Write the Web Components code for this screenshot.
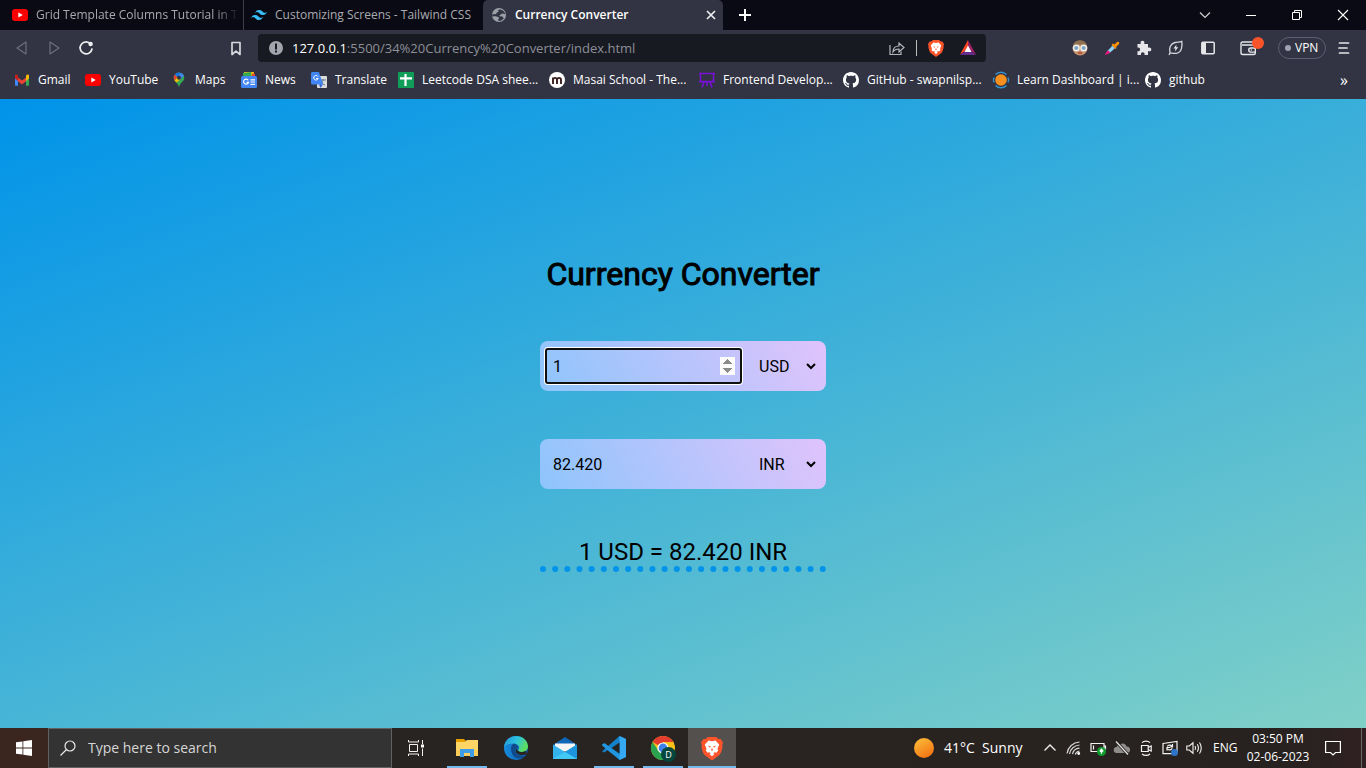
<!DOCTYPE html>
<html lang="en">
<head>
<meta charset="utf-8">
<title>Currency Converter</title>
<style>
  html, body { margin: 0; height: 100%; }
  body { font: 12px/16px "Open Sans", "Noto Sans", sans-serif; color: #fff; overflow: hidden; }
</style>
</head>
<body>
<desktop-screen>
  <browser-chrome slot="browser"></browser-chrome>
  <currency-converter slot="page"></currency-converter>
  <task-bar slot="taskbar"></task-bar>
</desktop-screen>

<script>
const define = (name, html, setup) => {
  const template = document.createElement('template');
  template.innerHTML = html;
  customElements.define(name, class extends HTMLElement {
    constructor() {
      super();
      this.attachShadow({ mode: 'open' }).append(template.content.cloneNode(true));
    }
    connectedCallback() { if (setup) setup(this, this.shadowRoot); }
  });
};

const ICONS = {
  youtube: `<rect x="0" y="2" width="16" height="12" rx="3" fill="#f00"/><path d="M6.3 5.4v5.2L10.8 8z" fill="#fff"/>`,
  tailwind: `<path d="M4 6.4C4.6 4.1 6 3 8.1 3c3.2 0 3.6 2.4 5.2 2.8 1 .3 2-.1 2.7-1.2-.5 2.3-1.9 3.4-4 3.4-3.2 0-3.6-2.4-5.2-2.8C5.7 4.9 4.8 5.3 4 6.4zM0 11.4C.6 9.1 2 8 4.1 8c3.2 0 3.6 2.4 5.2 2.8 1 .3 2-.1 2.7-1.2-.5 2.3-1.9 3.4-4 3.4-3.2 0-3.6-2.4-5.2-2.8-1.1-.3-2 .1-2.8 1.2z" fill="#38bdf8"/>`,
  globe: `<circle cx="8" cy="8" r="7" fill="#9aa0a6"/><path d="M9 2.600c-1.300-.3-2.300.6-1.600 1.500.5.700-.5 1.200-1.400 1.500-.8.300-.4 1.300-1 1.500-1.100.3-2.400-.3-3.800.4l.1 2c1.500.2 3.300-.6 4.200.1.900.6 2.300.3 2.500 1.300.1.800-.9 1-.9 2.100 0 .6.600.9 1.200.9 1.800 0 3.600-1.300 4.600-2.900-.9-.2-1-1.300-1.900-1.600-.8-.2-1.900.5-2.400-.3-.4-.8.4-1.500 1.300-1.700.8-.1.900-.9 1.800-.8.800.1 1.300.8 2.500.5-.4-2-2.400-4.200-5.200-4.500z" fill="#323443"/>`,
  close: `<path d="M4 4l8 8M12 4l-8 8" stroke="#eee" stroke-width="1.7"/>`,
  plus: `<path d="M8 2v12M2 8h12" stroke="#fff" stroke-width="2"/>`,
  chevdown: `<path d="M3 5.5l5 5 5-5" fill="none" stroke="#d0d0d4" stroke-width="1.2"/>`,
  minimize: `<path d="M3 8.5h10" stroke="#fff" stroke-width="1"/>`,
  restore: `<path d="M3.500 5.500h7v7h-7zM5.500 5.500v-2h7v7h-2" fill="none" stroke="#fff"/>`,
  winclose: `<path d="M3 3l10 10M13 3L3 13" stroke="#fff" stroke-width="1.1"/>`,
  back: `<path d="M12 2v12L3 8z" fill="none" stroke="#6c6e7c" stroke-width="1.2" stroke-linejoin="round"/>`,
  forward: `<path d="M4 2v12l9-6z" fill="none" stroke="#6c6e7c" stroke-width="1.2" stroke-linejoin="round"/>`,
  reload: `<path d="M12.8 4.1A6 6 0 1 0 14 9" fill="none" stroke="#eee" stroke-width="1.7" stroke-linecap="round"/><circle cx="12.6" cy="4" r="2.2" fill="#eee"/>`,
  bookmark: `<path d="M4 2.500h8v12l-4-3.300-4 3.300z" fill="none" stroke="#d8d8de" stroke-width="1.7" stroke-linejoin="round"/>`,
  info: `<circle cx="8" cy="8" r="7" fill="#a2a4ae"/><path d="M8 3.500v6M8 10.600v2" stroke="#181a22" stroke-width="2"/>`,
  share: `<path d="M1 5v9.500h11v-3" fill="none" stroke="#b6b7be" stroke-width="1.2"/><path d="M4 12c0-4 2.500-6 6-6V3l5 4.500-5 4.500V9C7.500 9 5.500 9.500 4 12z" fill="none" stroke="#b6b7be" stroke-width="1.2"/>`,
  brave: `<path d="M5 0h6l1.700 1.500h1.600L16 4l-.6 2 .3 1c-.6 3-1.500 5.400-2.500 6.300L8 17l-5.200-3.700C1.800 12.400.9 10 .3 7l.3-1L0 4l1.700-2.500h1.600z" fill="#fb542b"/><path d="M8 3l2.500-.5 2.700 3L12 8.800l.5 1.200-1.400 1.500-1.300-.4L9 12l.8.5L8 14l-1.800-1.500L7 12l-.8-.9-1.300.4L3.500 10 4 8.800 2.800 5.500l2.700-3z" fill="#fff"/><path d="M4.800 6.200l2.400.7-.6.9zM11.200 6.200l-2.400.7.6.9zM8 7.500l.6 2L8 10.400l-.6-.9z" fill="#fb542b"/>`,
  bat: `<path d="M8 0L0 14.500 8 9z" fill="#ff4724"/><path d="M8 0l8 14.500L8 9z" fill="#9e1f63"/><path d="M0 15h16L8 9z" fill="#662d91"/><path d="M8 5.500L4.500 12h7z" fill="#fff"/>`,
  face: `<circle cx="8" cy="8" r="7.5" fill="#c58d68"/><path d="M1 6C2 1.500 5 .5 8 .5S14 1.500 15 6c-3-2-11-2-14 0z" fill="#8d7050"/><circle cx="4.300" cy="8" r="2.800" fill="#7fa6bf" stroke="#f2f2f2" stroke-width="1.400"/><circle cx="11.700" cy="8" r="2.800" fill="#7fa6bf" stroke="#f2f2f2" stroke-width="1.400"/><path d="M6 13h4" stroke="#a33b35" stroke-width="1.200"/>`,
  picker: `<path d="M9 3.500l1.500 1L13 2c1.500-1 3 .5 2 2l-3 3 .5 1-1 1-4-4 1-1z" fill="#ff9100"/><path d="M8.300 5.700l2.600 2.600L5 13.500l-2-2z" fill="#8ed1f5"/><path d="M4 10.200l2.500 2.300L3 14.500 1 15l.7-2z" fill="#e6177c"/>`,
  puzzle: `<path d="M1.500 4h3.300C4.100 1.900 5 .8 6.500.8S8.900 1.900 8.200 4H12v3.700c2-.6 3.300.2 3.300 1.700S14 11.700 12 11.100V15H8.500c.4-1.700-.4-2.700-1.700-2.700S4.600 13.300 5 15H1.500v-3.800c1.700.4 2.600-.4 2.600-1.700S3.200 7.300 1.500 7.700z" fill="#e6e6ea"/>`,
  leaf: `<path d="M2 13c-1.300-5 .5-9.500 5-10.500 2.500-.6 4.500-.3 6.800-1.200.8 5-.2 11.200-5.300 12C6 13.800 4 13 2 13zm0 0l-1 2" fill="none" stroke="#d8d8de" stroke-width="1.3"/><path d="M8.500 4.500L5.500 8.400h2l-.7 3 3.500-4.200H8.200z" fill="#e6e6ea"/>`,
  sidebar: `<rect x="1.800" y="2.300" width="12.400" height="11.400" rx="1" fill="none" stroke="#e6e6ea" stroke-width="1.500"/><path d="M2 2.500h4v11H2z" fill="#e6e6ea"/>`,
  wallet: `<path d="M14 5V3.600C14 2.600 13.400 2 12.400 2H2.600C1.500 2 1 2.700 1 3.700v9C1 13.800 1.700 14.500 2.800 14.500h11c1 0 1.500-.5 1.500-1.500V6.500c0-1-.5-1.500-1.500-1.500H2M15 8h-4.200a2 2 0 0 0 0 4.100H15" fill="none" stroke="#e6e6ea" stroke-width="1.400"/><circle cx="11.300" cy="10" r=".8" fill="#e6e6ea"/>`,
  menu: `<path d="M3.500 3h9M3 8h8M3.500 13h9" stroke="#e6e6ea" stroke-width="1.700" stroke-linecap="round"/>`,
  gmail: `<path d="M1 3v10.500h3V7z" fill="#4285f4"/><path d="M15 3v10.500h-3V7z" fill="#34a853"/><path d="M1 3.500L8 8.500l7-5V7l-7 5.500L1 7z" fill="#ea4335"/><path d="M1 7V4c0-1.300 1-2 2-1.200L4 3.500v6z" fill="#c5221f"/><path d="M12 9.500v-6l1-.7c1-.8 2-.1 2 1.200v3z" fill="#fbbc04"/><path d="M1 6.500l3 2.500v4.500H2c-.6 0-1-.4-1-1z" fill="#4285f4"/><path d="M15 6.500L12 9v4.500h2c.6 0 1-.4 1-1z" fill="#34a853"/>`,
  maps: `<path d="M8 .5a5.300 5.300 0 0 0-5.300 5.300C2.700 9.500 7 10.500 8 15.500c1-5 5.300-6 5.300-9.700A5.300 5.300 0 0 0 8 .5z" fill="#34a853"/><path d="M3.900 2.500L6.500 5 3.700 8.500C2.300 6.500 2.300 4.400 3.900 2.500z" fill="#ea4335"/><path d="M3.900 2.500A5.300 5.300 0 0 1 10 .9L6.500 5z" fill="#1a73e8"/><path d="M10 .9c1.300.5 2.300 1.300 2.900 2.700L9.500 7.500 8 3.700z" fill="#4285f4"/><path d="M9.500 7.500l-4.200 3-1.600-2L6.500 5z" fill="#fbbc04"/><circle cx="8" cy="5.800" r="2" fill="#323443"/>`,
  news: `<path d="M3 0h10v4H3z" fill="#fbbc04"/><path d="M2 1l8-1 .5 4H2z" fill="#34a853"/><path d="M11 1.500l3 .5v3h-3z" fill="#ea4335"/><rect y="4" width="16" height="12" rx="1.500" fill="#4285f4"/><path d="M7.200 8.300A2.500 2.500 0 1 0 7.500 10.300H5.500M9.500 7.800H14M9.500 10H14M9.500 12.300H14" fill="none" stroke="#fff" stroke-width="1.200"/>`,
  translate: `<rect x="6" y="4" width="10" height="12" rx="1" fill="#dcdcdc"/><path d="M9 8h6M12 7v1c0 2.500-2 4-3 5M10 9.500c1 2 2.500 3 4 3.500" stroke="#607d8b" fill="none"/><path d="M1.500 0H8l4 12.500H1.500C.6 12.500 0 12 0 11V1.500C0 .6.6 0 1.500 0z" fill="#4285f4"/><path d="M8 12.500h4L9.500 16z" fill="#3367d6"/><path d="M7 4.600A2.300 2.300 0 1 0 7.200 6.500H5" fill="none" stroke="#fff"/>`,
  sheet: `<rect width="16" height="16" rx="1" fill="#0f9d58"/><path d="M2 6.300h12M7.500 2v12" stroke="#fff" stroke-width="2.200"/>`,
  masai: `<circle cx="8" cy="8" r="8" fill="#fff"/><path d="M4 12V5.500M4 7.800c.4-2.600 3.800-2.600 4 0V12M8 7.800c.4-2.600 4-2.600 4 .2v4" fill="none" stroke="#3b2020" stroke-width="1.900"/>`,
  board: `<path d="M1.500 1.500h13v8h-13zM0 1.500h16M0 9.800h16" fill="none" stroke="#7a10d8" stroke-width="1.500"/><path d="M5 10l-2 5.500M8 10v4M11 10l2 5.500" stroke="#7a10d8" stroke-width="1.500"/>`,
  github: `<path d="M8 0C3.580 0 0 3.580 0 8c0 3.540 2.290 6.530 5.470 7.590.4.070.55-.17.55-.38 0-.19-.01-.82-.01-1.490-2.010.37-2.530-.49-2.690-.94-.09-.23-.48-.94-.82-1.130-.28-.15-.68-.52-.01-.53.63-.01 1.080.58 1.230.82.72 1.210 1.870.87 2.330.66.070-.52.28-.87.51-1.070-1.780-.2-3.640-.89-3.640-3.950 0-.87.31-1.590.82-2.150-.08-.2-.36-1.020.08-2.120 0 0 .67-.21 2.200.82.64-.18 1.320-.27 2-.27s1.360.09 2 .27c1.530-1.040 2.200-.82 2.200-.82.44 1.100.16 1.920.08 2.120.51.56.82 1.270.82 2.150 0 3.070-1.870 3.750-3.650 3.950.29.25.54.73.54 1.480 0 1.070-.01 1.930-.01 2.200 0 .21.15.46.55.38A8.010 8.010 0 0 0 16 8c0-4.420-3.580-8-8-8z" fill="#fff"/>`,
  learn: `<circle cx="8" cy="8" r="5.800" fill="#f7901e"/><path d="M2.500 2.600a7.600 7.600 0 0 1 11 0M2.500 13.400a7.600 7.600 0 0 0 11 0M1 5.500Q-.2 8 1 10.500M15 5.500q1.200 2.500 0 5" fill="none" stroke="#3492cf" stroke-width="1.400"/>`,
  windows: `<path d="M0 2.300L6.500 1.400v6.100H0zM7.300 1.300L16 0v7.500H7.300zM0 8.400h6.500v6.200L0 13.700zM7.300 8.400H16V16l-8.700-1.300z" fill="#fff"/>`,
  search: `<circle cx="10" cy="6" r="5" fill="none" stroke="#e8e8e8" stroke-width="1.200"/><path d="M6.500 9.500L.5 15.500" stroke="#e8e8e8" stroke-width="1.300"/>`,
  taskview: `<path d="M1.500 4.500h8v7h-8zM.5 0v2h10V0M.5 16v-2h10v2M14.500 0v4M14.500 8.500V16" fill="none" stroke="#f2f2f2"/><path d="M13 4.500h3v3h-3z" fill="#fff"/>`,
  folder: `<path d="M1 3h8l2 2v3H1z" fill="#e8a000"/><path d="M1 6h9l2-2h11v16H1z" fill="#ffd666"/><path d="M1 14h22v6H1z" fill="#f9c74f" opacity=".6"/><path d="M5 21v-8h14v8h-4v-4H9v4z" fill="#3f9de8"/><path d="M9 17h6v3H9z" fill="#f8cf60"/>`,
  edge: `<defs><linearGradient id="e1" x1="0" y1="0" x2="1" y2=".4"><stop stop-color="#2390d9"/><stop offset=".55" stop-color="#2cc2de"/><stop offset="1" stop-color="#5bdd60"/></linearGradient><linearGradient id="e2"><stop stop-color="#168cdd"/><stop offset="1" stop-color="#0f56a8"/></linearGradient></defs><circle cx="12" cy="12" r="12" fill="url(#e2)"/><path d="M0 11C1 4 6 0 12 0c7 0 12 5 12 10.500 0 3.500-2.800 5.500-6 5.500-3 0-4.500-1.200-3.500-2.600 2.200-3.200-1.500-6-5-6C5 7.400 1.500 9 0 11z" fill="url(#e1)"/><path d="M9.300 7.800C6 10 6.500 17 10 20.500c3 2.500 7.500 2.600 12-1-4 1.300-9 .2-10.500-3.500-.9-2.500.5-4.500 2.700-4.300-.5-2.500-2.400-4-4.900-3.900z" fill="#114a8b"/><path d="M22.800 17.600c-3 2.400-8 2.300-10.500-.8-1-1.300-1-3.500 1-4.500.3 1-.8 1.500.8 2.800 2 1.300 5 1.300 7.500-.3z" fill="#272320"/>`,
  mail: `<path d="M0 9l12-8 12 8v4H0z" fill="#1067b8"/><path d="M2 7.500h20v8H2z" fill="#f5f5f5"/><path d="M0 8.500l12 7.500L24 8.500V23H0z" fill="#35b3ef"/><path d="M24 8.500V23L12 16z" fill="#1d93dd"/><path d="M0 23l12-7 12 7z" fill="#42c8f5"/>`,
  vscode: `<path d="M17.500 0L24 3v18l-6.500 3L6 13.500 2.500 16.500 0 15.300l15-13z" fill="#1481cb"/><path d="M0 8.500L2.500 7 18 19v5L0 10z" fill="#2197e0"/><path d="M17.500 0L24 3v18l-6.500 3z" fill="#35a9f2"/><path d="M17.500 6.500v11L9.500 12z" fill="#272320"/><path d="M3 12L0 9.500v5z" fill="#272320"/>`,
  chrome: `<circle cx="12" cy="12" r="12" fill="#fbc116"/><path d="M12 12L1.600 6A12 12 0 0 1 22.400 6H12z" fill="#e33b2e"/><path d="M1.600 6A12 12 0 0 0 12 24l5-9-9 .5z" fill="#29a350"/><circle cx="12" cy="12" r="5.600" fill="#fff"/><circle cx="12" cy="12" r="4.400" fill="#3f7fe8"/>`,
  up: `<path d="M2.500 10.500L8 5l5.500 5.500" fill="none" stroke="#f2f2f2" stroke-width="1.300"/>`,
  wifi: `<path d="M1 13.500C2 7 7 2.500 13.500 2M3.500 14C4.200 9 8.500 5.500 13.500 5M6.500 14.200c.6-3.200 3.500-5.700 7-6M9.300 14.500c.4-1.700 2-3.200 4.200-3.500" fill="none" stroke="#d8d8d8" stroke-width="1.200"/><circle cx="12.700" cy="13.500" r="1.400" fill="#fff"/>`,
  battery: `<path d="M1 3.500h13v8H1zM14 6h1.500v3H14M3.500 5.500v4" fill="none" stroke="#f2f2f2" stroke-width="1.200"/><circle cx="11.500" cy="11.500" r="4.500" fill="#109c2e"/><path d="M11.500 14v-2M11.500 8.800c-2.500 2.200-1.700 3.200 0 3.200s2.500-1 0-3.200z" stroke="#fff" fill="#fff" stroke-width=".8"/>`,
  cloud: `<path d="M3 13a3 3 0 0 1-.5-6A3 3 0 0 1 5.500 5a4 4 0 0 1 7 1.500A3.300 3.300 0 0 1 13.500 13z" fill="#8f8d8b"/><path d="M2 1.500l12 13" stroke="#272320" stroke-width="3"/><path d="M2 1.500l12 13" stroke="#e8e8e8" stroke-width="1.200"/>`,
  camera: `<path d="M3.500 5.500h6.700v6H3.500zM10.200 7.500l3-1.500v5l-3-1.500M4 2.700C6 .5 10 .5 12 2.700M4 13.800c2 2.200 6 2.200 8 0" fill="none" stroke="#f2f2f2" stroke-width="1.200"/>`,
  update: `<path d="M1 3.500l14-2v11l-4 1.200H1z" fill="none" stroke="#f2f2f2" stroke-width="1.200"/><path d="M10.500 4v3h-3M5 10.500v-3h3M10 6.300C8.500 4.500 6 5 5.300 6.500M5.500 8.800C7 10.500 9.500 10 10.200 8.300" fill="none" stroke="#f2f2f2" stroke-width="1.200"/><circle cx="12.500" cy="12.500" r="3.500" fill="#2d74c9"/>`,
  volume: `<path d="M.8 6h2.500L7 2.800v10.400L3.300 10H.8zM9 6q1.300 2 0 4M11.300 4.300q2.300 3.700 0 7.400M13.500 2.500q3.500 5.500 0 11" fill="none" stroke="#f2f2f2" stroke-width="1.100"/>`,
  notification: `<path d="M.6 1.500h14.800v11H10.500L8 15l-2.500-2.500H.6z" fill="none" stroke="#fff" stroke-width="1.200"/>`
};
const BOX = { folder: 24, edge: 24, mail: 24, vscode: 24, chrome: 24 };

define('ui-icon', `
<style>:host{display:block;flex:none;width:var(--size,16px);height:var(--size,16px)} svg{display:block;width:100%;height:100%;overflow:visible}</style>
<svg aria-hidden="true"></svg>`, (el, root) => {
  const name = el.getAttribute('name'), box = BOX[name] || 16, svg = root.querySelector('svg');
  svg.setAttribute('viewBox', `0 0 ${box} ${box}`);
  svg.innerHTML = ICONS[name];
  if (el.hasAttribute('size')) el.style.setProperty('--size', el.getAttribute('size') + 'px');
});

define('icon-button', `
<style>
:host{display:block;flex:none;width:32px;height:100%}
button{all:unset;box-sizing:border-box;width:100%;height:100%;display:flex;align-items:center;justify-content:center;position:relative}
</style>
<button type="button"><slot></slot></button>`, (el, root) => {
  root.querySelector('button').setAttribute('aria-label', el.getAttribute('label') || '');
});

define('browser-tab', `
<style>
:host{display:block;width:239px;box-sizing:border-box;color:#a9aab0}
:host([divided]){width:240px;border-right:1px solid #3c3d46}
:host([active]){width:240px;background:#323443;color:#fff;font-weight:600;border-radius:5px 5px 0 0}
button{all:unset;box-sizing:border-box;display:flex;align-items:center;gap:8px;height:100%;width:100%;padding:0 4px 0 8px}
:host(:not([divided]):not([active])) button{padding-left:7px}
span{flex:1;white-space:nowrap;overflow:hidden}
:host([divided]) span{-webkit-mask-image:linear-gradient(90deg,#000 88%,transparent)}
</style>
<button type="button" role="tab"><slot name="icon"></slot><span><slot></slot></span><slot name="close"></slot></button>`);

define('bookmark-link', `
<style>
:host{display:block}
a{display:flex;align-items:center;gap:8px;color:#fff;text-decoration:none;white-space:nowrap}
</style>
<a href="#"><slot name="icon"></slot><slot></slot></a>`, el => {
  if (el.hasAttribute('width')) el.style.width = el.getAttribute('width') + 'px';
});

define('browser-chrome', `
<style>
:host{display:block;background:#323443}
nav,header,.tools{display:flex;align-items:center}
header{height:30px;background:#0a0a14;padding-left:4px}
header>*{height:30px}
.window{display:flex;margin-left:auto}
.window icon-button{width:46px}
.new{width:44px}
.tools{height:36px;padding-left:6px;padding-right:6px}
.mark{margin-left:118px}
.address{flex:1;display:flex;align-items:center;height:28px;background:#181a22;border-radius:4px;margin:0 78px 0 6px;padding:0 2px 0 10px}
.url{flex:1;display:flex;align-items:center;margin-left:8px;font-size:13px;color:#8d8f98;white-space:nowrap}
b{font-weight:400;color:#fff}
.line{width:1px;height:16px;background:#bbb;margin:0 3px}
.badge{position:absolute;right:8px;top:7px;width:12px;height:12px;border-radius:50%;background:#fb542b}
.wallet{width:48px}
.vpn{all:unset;box-sizing:border-box;display:flex;align-items:center;gap:4px;width:48px;height:22px;border:1px solid #5c5f73;border-radius:11px;padding-left:6px;margin:0 2px 0 6px}
.vpn i{width:6px;height:6px;border-radius:50%;background:#a0a3b5}
nav{height:28px;padding:0 18px 5px 14px}
.more{all:unset;margin-left:auto;font-size:16px}
</style>
<header role="tablist">
  <browser-tab divided><ui-icon slot="icon" name="youtube"></ui-icon>Grid Template Columns Tutorial in Tailwind</browser-tab>
  <browser-tab><ui-icon slot="icon" name="tailwind"></ui-icon>Customizing Screens - Tailwind CSS</browser-tab>
  <browser-tab active><ui-icon slot="icon" name="globe"></ui-icon>Currency Converter<ui-icon slot="close" name="close"></ui-icon></browser-tab>
  <icon-button class="new" label="New tab"><ui-icon name="plus"></ui-icon></icon-button>
  <div class="window">
    <icon-button label="Search tabs"><ui-icon name="chevdown"></ui-icon></icon-button>
    <icon-button label="Minimize"><ui-icon name="minimize"></ui-icon></icon-button>
    <icon-button label="Restore"><ui-icon name="restore"></ui-icon></icon-button>
    <icon-button label="Close"><ui-icon name="winclose"></ui-icon></icon-button>
  </div>
</header>
<div class="tools">
  <icon-button label="Back"><ui-icon name="back"></ui-icon></icon-button>
  <icon-button label="Forward"><ui-icon name="forward"></ui-icon></icon-button>
  <icon-button label="Reload"><ui-icon name="reload"></ui-icon></icon-button>
  <icon-button class="mark" label="Bookmark"><ui-icon name="bookmark"></ui-icon></icon-button>
  <div class="address">
    <ui-icon name="info"></ui-icon>
    <div class="url" role="textbox" aria-label="Address" tabindex="0"><b>127.0.0.1</b>:5500/34%20Currency%20Converter/index.html</div>
    <icon-button label="Share"><ui-icon name="share"></ui-icon></icon-button>
    <span class="line"></span>
    <icon-button label="Shields"><ui-icon name="brave"></ui-icon></icon-button>
    <icon-button label="Rewards"><ui-icon name="bat"></ui-icon></icon-button>
  </div>
  <icon-button label="Profile extension"><ui-icon name="face"></ui-icon></icon-button>
  <icon-button label="Color picker"><ui-icon name="picker"></ui-icon></icon-button>
  <icon-button label="Extensions"><ui-icon name="puzzle"></ui-icon></icon-button>
  <icon-button label="Energy saver"><ui-icon name="leaf"></ui-icon></icon-button>
  <icon-button label="Sidebar"><ui-icon name="sidebar"></ui-icon></icon-button>
  <icon-button class="wallet" label="Wallet"><ui-icon name="wallet"></ui-icon><i class="badge"></i></icon-button>
  <button class="vpn" type="button"><i></i>VPN</button>
  <icon-button label="Menu"><ui-icon name="menu"></ui-icon></icon-button>
</div>
<nav aria-label="Bookmarks">
  <bookmark-link width="71"><ui-icon slot="icon" name="gmail"></ui-icon>Gmail</bookmark-link>
  <bookmark-link width="86"><ui-icon slot="icon" name="youtube"></ui-icon>YouTube</bookmark-link>
  <bookmark-link width="70"><ui-icon slot="icon" name="maps"></ui-icon>Maps</bookmark-link>
  <bookmark-link width="70"><ui-icon slot="icon" name="news"></ui-icon>News</bookmark-link>
  <bookmark-link width="87"><ui-icon slot="icon" name="translate"></ui-icon>Translate</bookmark-link>
  <bookmark-link width="151"><ui-icon slot="icon" name="sheet"></ui-icon>Leetcode DSA shee...</bookmark-link>
  <bookmark-link width="150"><ui-icon slot="icon" name="masai"></ui-icon>Masai School - The...</bookmark-link>
  <bookmark-link width="144"><ui-icon slot="icon" name="board"></ui-icon>Frontend Develop...</bookmark-link>
  <bookmark-link width="150"><ui-icon slot="icon" name="github"></ui-icon>GitHub - swapnilsp...</bookmark-link>
  <bookmark-link width="152"><ui-icon slot="icon" name="learn"></ui-icon>Learn Dashboard | i...</bookmark-link>
  <bookmark-link><ui-icon slot="icon" name="github"></ui-icon>github</bookmark-link>
  <button class="more" type="button" aria-label="More bookmarks">»</button>
</nav>`);

define('currency-field', `
<style>
:host{display:flex;box-sizing:border-box;height:50px;padding:8px 7px 8px 6px;border-radius:8px;background:linear-gradient(62deg,#8ec5fc 0%,#e0c3fc 100%)}
input,select{font:16px Roboto,sans-serif;color:#000;background:transparent;border:0;outline:0;margin:0;box-sizing:border-box;height:34px}
input{flex:1;min-width:0;padding:0 6px 0 7px;border-radius:2px}
input::-webkit-inner-spin-button{opacity:0}
:host([selected]) input{outline:2px solid #101010;outline-offset:-1px;box-shadow:0 0 0 2px #fff}
:host([selected]) input::-webkit-inner-spin-button{opacity:1}
select{width:64px;margin-left:14px}
</style>
<input type="number" step="any"><select></select>`, (el, root) => {
  const input = root.querySelector('input'), select = root.querySelector('select');
  if (el.hasAttribute('text')) input.type = 'text';
  input.value = el.getAttribute('value');
  input.setAttribute('aria-label', el.getAttribute('label'));
  select.setAttribute('aria-label', el.getAttribute('label') + ' currency');
  if (!select.options.length) {
    ['USD', 'INR'].forEach(code => select.add(new Option(code, code)));
    select.value = el.getAttribute('currency');
  }
});

define('currency-converter', `
<style>
:host{display:flex;align-items:center;justify-content:center;color:#000;font-family:Roboto,sans-serif;background:linear-gradient(160deg,#0093e9 0%,#80d0c7 100%)}
main{display:flex;flex-direction:column;gap:48px;width:286px}
h1{margin:0;font-size:32px;line-height:38px;font-weight:400;-webkit-text-stroke:1px #000;text-align:center;white-space:nowrap}
p{margin:0;padding-top:1px;font-size:24px;line-height:28px;text-align:center;border-bottom:6px dotted #0093e9}
</style>
<main>
  <h1>Currency Converter</h1>
  <currency-field selected label="Amount" value="1" currency="USD"></currency-field>
  <currency-field text label="Result" value="82.420" currency="INR"></currency-field>
  <p>1 USD = 82.420 INR</p>
</main>`);

define('task-button', `
<style>
:host{display:block;width:48px;height:40px}
button{all:unset;box-sizing:border-box;width:100%;height:100%;display:flex;align-items:center;justify-content:center;position:relative}
:host([open]) button::after{content:"";position:absolute;left:4px;right:4px;bottom:0;height:2px;background:#76b9ed}
:host([active]) button{background:#53504e}
:host([active]) button::after{left:0;right:0}
</style>
<button type="button"><slot></slot></button>`, (el, root) => {
  root.querySelector('button').setAttribute('aria-label', el.getAttribute('label'));
});

define('task-bar', `
<style>
:host{display:flex;height:40px;background:linear-gradient(90deg,#3a251f 0,#3a251f 48px,#272422 400px,#292320 70%,#272220 94%,#302022)}
label{box-sizing:border-box;display:flex;align-items:center;gap:12px;width:344px;height:40px;padding:0 11px;background:#333;border:1px solid #626262}
input{all:unset;flex:1;min-width:0;font-size:14px;color:#d6d6d6}
input::placeholder{color:#d6d6d6}
.apps{display:flex;gap:1px;margin-left:3px}
.badge{position:absolute;right:11px;bottom:6px;width:15px;height:15px;border-radius:50%;background:#05473d;font-size:9px;line-height:15px;text-align:center}
.tray{display:flex;align-items:center;margin-left:auto}
.weather{all:unset;display:flex;align-items:center;gap:10px;font-size:14px;white-space:pre;width:124px}
.sun{width:20px;height:20px;border-radius:50%;background:linear-gradient(150deg,#fcc23c,#f2690d)}
.tray icon-button{width:24px}
.lang{margin:0 0 0 7px;width:24px}
.clock{width:72px;margin-left:5px;text-align:center;line-height:18px;white-space:nowrap}
.tray .note{width:28px;margin-right:14px;margin-left:5px}
.edge{width:4px;height:40px;border-left:1px solid #6b6766}
</style>
<task-button label="Start"><ui-icon name="windows"></ui-icon></task-button>
<label><ui-icon name="search"></ui-icon><input type="text" aria-label="Search" placeholder="Type here to search"></label>
<task-button label="Task view"><ui-icon name="taskview"></ui-icon></task-button>
<div class="apps">
  <task-button open label="File Explorer"><ui-icon name="folder" size="24"></ui-icon></task-button>
  <task-button label="Edge"><ui-icon name="edge" size="24"></ui-icon></task-button>
  <task-button label="Mail"><ui-icon name="mail" size="24"></ui-icon></task-button>
  <task-button open label="Visual Studio Code"><ui-icon name="vscode" size="24"></ui-icon></task-button>
  <task-button open label="Chrome"><ui-icon name="chrome" size="24"></ui-icon><span class="badge">D</span></task-button>
  <task-button open active label="Brave"><ui-icon name="brave" size="22"></ui-icon></task-button>
</div>
<div class="tray">
  <button class="weather" type="button"><i class="sun"></i><span>41°C  Sunny</span></button>
  <icon-button label="Hidden icons"><ui-icon name="up"></ui-icon></icon-button>
  <icon-button label="Wi-Fi"><ui-icon name="wifi"></ui-icon></icon-button>
  <icon-button label="Battery"><ui-icon name="battery"></ui-icon></icon-button>
  <icon-button label="OneDrive"><ui-icon name="cloud"></ui-icon></icon-button>
  <icon-button label="Meet now"><ui-icon name="camera"></ui-icon></icon-button>
  <icon-button label="Updates"><ui-icon name="update"></ui-icon></icon-button>
  <icon-button label="Volume"><ui-icon name="volume"></ui-icon></icon-button>
  <span class="lang">ENG</span>
  <div class="clock">03:50 PM<br>02-06-2023</div>
  <icon-button class="note" label="Notifications"><ui-icon name="notification"></ui-icon></icon-button>
  <span class="edge"></span>
</div>`);

define('desktop-screen', `
<style>
:host{display:grid;grid-template-rows:99px 1fr 40px;height:100vh}
</style>
<slot name="browser"></slot><slot name="page"></slot><slot name="taskbar"></slot>`);
</script>
</body>
</html>
